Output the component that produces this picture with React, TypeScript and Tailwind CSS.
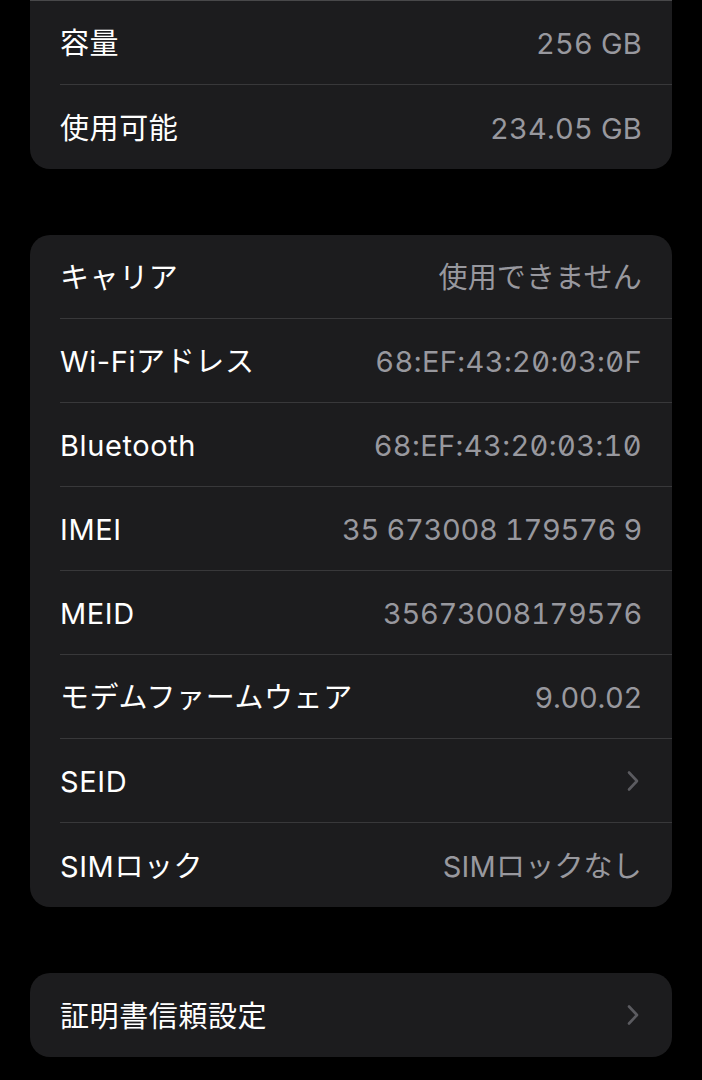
import React from 'react';

type Row = {
  label: string;
  value?: string;
  kind?: 'mono' | 'num';
  chevron?: boolean;
};

const storageRows: Row[] = [
  { label: '容量', value: '256 GB' },
  { label: '使用可能', value: '234.05 GB' },
];

const networkRows: Row[] = [
  { label: 'キャリア', value: '使用できません' },
  { label: 'Wi-Fiアドレス', value: '68:EF:43:20:03:0F', kind: 'mono' },
  { label: 'Bluetooth', value: '68:EF:43:20:03:10', kind: 'mono' },
  { label: 'IMEI', value: '35 673008 179576 9', kind: 'num' },
  { label: 'MEID', value: '35673008179576', kind: 'num' },
  { label: 'モデムファームウェア', value: '9.00.02', kind: 'num' },
  { label: 'SEID', chevron: true },
  { label: 'SIMロック', value: 'SIMロックなし' },
];

const Chevron = () => (
  <svg width="14" height="22" viewBox="0 0 14 22" fill="none" className="mr-[2px]">
    <path d="M3 2.5 L11 11 L3 19.5" stroke="#5b5b60" strokeWidth="2.6" strokeLinecap="round" strokeLinejoin="round" />
  </svg>
);

const valueClass = (kind?: Row['kind']) => {
  if (kind === 'mono') return 'tabular-nums slashed-zero tracking-[0.4px]';
  if (kind === 'num') return 'tabular-nums tracking-[-0.3px]';
  return 'tabular-nums tracking-[0.2px]';
};

const SettingRow: React.FC<{ row: Row; last: boolean }> = ({ row, last }) => (
  <div className="pl-[30px]">
    <div className={`h-[84px] flex items-center justify-between pr-[30px] ${last ? '' : 'border-b border-[#38383a]'}`}>
      <span className="text-white pt-[2px] tracking-[0.6px]">{row.label}</span>
      {row.chevron ? (
        <Chevron />
      ) : (
        <span className={`text-[#98989e] pt-[2px] ${valueClass(row.kind)}`}>{row.value}</span>
      )}
    </div>
  </div>
);

const Card: React.FC<{ rows: Row[]; className?: string }> = ({ rows, className = '' }) => (
  <div className={`bg-[#1c1c1e] rounded-[20px] overflow-hidden ${className}`}>
    {rows.map((r, i) => (
      <SettingRow key={r.label} row={r} last={i === rows.length - 1} />
    ))}
  </div>
);

export default function App() {
  return (
    <div
      className="w-[702px] h-[1080px] bg-black overflow-hidden px-[30px] text-[29px] leading-none"
      style={{ fontFamily: 'Inter, "Noto Sans CJK JP", sans-serif' }}
    >
      {/* 上のカード（先頭は画面外） */}
      <div className="bg-[#1c1c1e] rounded-b-[20px] overflow-hidden">
        <div className="h-px bg-[#48484a]" />
        {storageRows.map((r, i) => (
          <SettingRow key={r.label} row={r} last={i === storageRows.length - 1} />
        ))}
      </div>

      <Card rows={networkRows} className="mt-[66px]" />

      <Card rows={[{ label: '証明書信頼設定', chevron: true }]} className="mt-[66px]" />
    </div>
  );
}
